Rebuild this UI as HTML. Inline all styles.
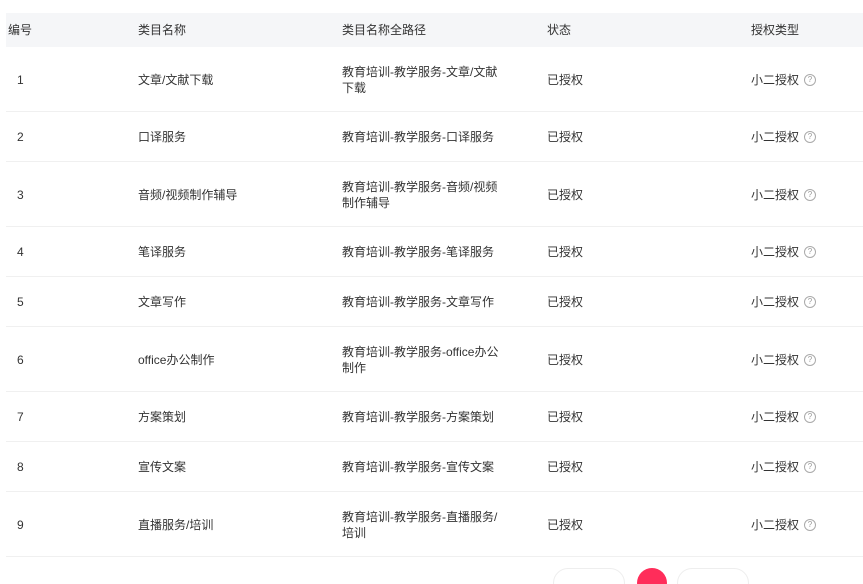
<!DOCTYPE html>
<html><head><meta charset="utf-8"><style>
*{margin:0;padding:0;box-sizing:border-box}
html,body{width:863px;height:584px;overflow:hidden}
body{background:#fff;font-family:"Liberation Sans","Noto Sans CJK SC",sans-serif;font-size:12px;color:#333;position:relative}
.hd{position:absolute;left:6px;top:13px;width:857px;height:34px;background:#f5f6f8}
.c{position:absolute;line-height:16px}
.row{position:absolute;left:6px;width:857px;border-bottom:1px solid #f0f0f0}
.q{position:absolute;width:12px;height:12px;border:1px solid #aaa;border-radius:50%;font-size:8px;line-height:10px;text-align:center;color:#999;left:53px;top:2px}
</style></head><body>
<div class="hd"></div>
<div class="c" style="left:8px;top:22px">编号</div>
<div class="c" style="left:138px;top:22px">类目名称</div>
<div class="c" style="left:342px;top:22px">类目名称全路径</div>
<div class="c" style="left:547px;top:22px">状态</div>
<div class="c" style="left:751px;top:22px">授权类型</div>
<div id="rows"></div>
<div style="position:absolute;left:553px;top:568px;width:72px;height:30px;border:1px solid #eee;border-radius:15px"></div>
<div style="position:absolute;left:637px;top:568px;width:30px;height:30px;background:#ff2d5a;border-radius:50%"></div>
<div style="position:absolute;left:677px;top:568px;width:72px;height:30px;border:1px solid #eee;border-radius:15px"></div>
<script>
var d=[["1","文章/文献下载","教育培训-教学服务-文章/文献<br>下载",65],["2","口译服务","教育培训-教学服务-口译服务",50],["3","音频/视频制作辅导","教育培训-教学服务-音频/视频<br>制作辅导",65],["4","笔译服务","教育培训-教学服务-笔译服务",50],["5","文章写作","教育培训-教学服务-文章写作",50],["6","office办公制作","教育培训-教学服务-office办公<br>制作",65],["7","方案策划","教育培训-教学服务-方案策划",50],["8","宣传文案","教育培训-教学服务-宣传文案",50],["9","直播服务/培训","教育培训-教学服务-直播服务/<br>培训",65]];
var y=47,h="";
d.forEach(function(r){var H=r[3],m=y+H/2-8,two=r[2].indexOf("<br>")>0;
h+='<div class="row" style="top:'+y+'px;height:'+H+'px"></div>';
h+='<div class="c" style="left:17px;top:'+m+'px">'+r[0]+'</div>';
h+='<div class="c" style="left:138px;top:'+m+'px">'+r[1]+'</div>';
h+='<div class="c" style="left:342px;top:'+(two?m-8:m)+'px">'+r[2]+'</div>';
h+='<div class="c" style="left:547px;top:'+m+'px">已授权</div>';
h+='<div class="c" style="left:751px;top:'+m+'px;width:70px">小二授权<span class="q">?</span></div>';
y+=H;});
document.getElementById("rows").innerHTML=h;
</script>
</body></html>
